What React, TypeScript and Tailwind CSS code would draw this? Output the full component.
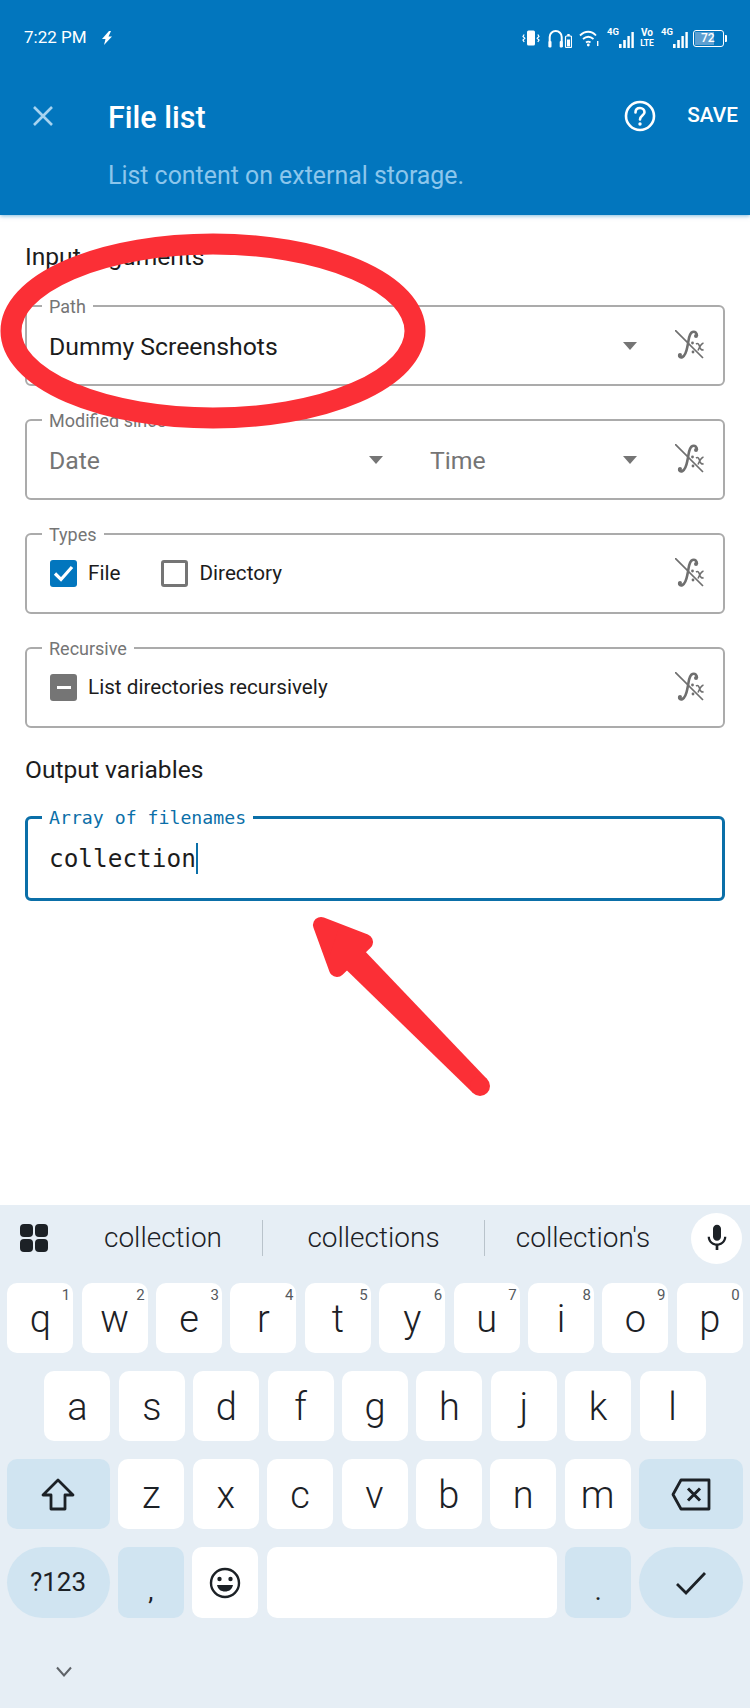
import React from 'react';

const row1 = [
  ['q', '1'], ['w', '2'], ['e', '3'], ['r', '4'], ['t', '5'],
  ['y', '6'], ['u', '7'], ['i', '8'], ['o', '9'], ['p', '0'],
];
const row2 = ['a', 's', 'd', 'f', 'g', 'h', 'j', 'k', 'l'];
const row3 = ['z', 'x', 'c', 'v', 'b', 'n', 'm'];

const Signal = () => (
  <svg width="15" height="16" viewBox="0 0 15 16" fill="#fff" className="mt-[3px] shrink-0">
    <rect x="0" y="12" width="2.600" height="4" />
    <rect x="4.200" y="8" width="2.600" height="8" />
    <rect x="8.400" y="4" width="2.400" height="12" />
    <rect x="12.400" y="0" width="2.400" height="16" />
  </svg>
);

const StatusIcons = () => (
  <div className="flex items-center text-white font-['Roboto',sans-serif] font-medium">
    {/* vibrate */}
    <svg width="18" height="16" viewBox="0 0 18 16" fill="none" stroke="#fff" strokeWidth="1.200" className="shrink-0">
      <rect x="5" y="0.500" width="8" height="15" rx="1.500" fill="#fff" stroke="none" />
      <path d="M2.200 4.500L1 6.500l1.800 1.800L1 10l1.200 2M15.800 4.500L17 6.500l-1.800 1.800L17 10l-1.200 2" />
    </svg>
    {/* headphones with battery */}
    <svg width="24" height="19" viewBox="0 0 24 19" fill="none" className="ml-[8px] shrink-0">
      <path d="M1.700 18V8a6 6 0 0 1 12 0v10" stroke="#fff" strokeWidth="2" />
      <rect x="0.500" y="12" width="3" height="6.500" rx="1" fill="#fff" />
      <rect x="11.700" y="12" width="3" height="6.500" rx="1" fill="#fff" />
      <rect x="17.500" y="7" width="6" height="11.500" rx="1" stroke="#fff" strokeWidth="1.200" />
      <rect x="19.300" y="5" width="2.400" height="2" fill="#fff" />
      <rect x="19" y="10.500" width="3" height="7" fill="#fff" />
    </svg>
    {/* wifi */}
    <svg width="20" height="18" viewBox="0 0 20 18" fill="none" stroke="#fff" strokeWidth="1.800" className="ml-[7px] shrink-0">
      <path d="M1 6.500C6 1.500 12.500 1.500 17 6.500" />
      <path d="M4 10c3.500-3 7-3 10.500 0" />
      <path d="M7 13.500c1.500-1.200 3-1.200 4.500 0" />
      <circle cx="9.300" cy="16" r="1.400" fill="#fff" stroke="none" />
      <path d="M18.700 12v5" strokeWidth="1.400" />
    </svg>
    <span className="ml-[8px] -mt-[12px] w-[12px] text-[9.500px] leading-none font-bold">4G</span>
    <Signal />
    <div className="ml-[6px] flex w-[14px] flex-col items-center text-[10px] leading-[10px] font-bold">
      <span>Vo</span>
      <span className="text-[8.500px]">LTE</span>
    </div>
    <span className="ml-[7px] -mt-[12px] w-[12px] text-[9.500px] leading-none font-bold">4G</span>
    <Signal />
    {/* battery */}
    <div className="ml-[5px] h-[17px] w-[31px] rounded-[3px] border border-white p-[1px]">
      <div className="flex h-full w-[72%] items-center justify-center bg-[#5d9fd1] pl-[6px] text-[12px] leading-none">
        72
      </div>
    </div>
    <div className="ml-[1px] h-[7px] w-[2px] rounded-r-[1px] bg-white" />
  </div>
);

const Header = () => (
  <header className="h-[215px] shrink-0 bg-[#0276BE] shadow-[0_1px_4px_rgba(2,118,190,0.5)] font-['Roboto',sans-serif]">
    <div className="flex h-[76px] items-center pl-[24px] pr-[23px]">
      <span className="text-[17px] text-white">7:22 PM</span>
      <svg width="12" height="14" viewBox="0 0 12 14" fill="#fff" className="ml-[14px]">
        <path d="M8 0L1 8h3.500L3 14l8-8.500H7.500L10 0z" />
      </svg>
      <div className="flex-1" />
      <StatusIcons />
    </div>
    <div className="flex h-[80px] items-center pl-[32px] pr-[12px]">
      <svg width="22" height="22" viewBox="0 0 22 22" fill="none" stroke="#A6D3F0" strokeWidth="2.600">
        <path d="M2 2l18 18M20 2L2 20" />
      </svg>
      <h1 className="ml-[54px] pt-[3px] text-[30.500px] font-medium text-white">File list</h1>
      <div className="flex-1" />
      <svg width="32" height="32" viewBox="0 0 32 32" fill="none" stroke="#fff" strokeWidth="2.600" strokeLinecap="round">
        <circle cx="16" cy="16" r="14" />
        <path d="M11.500 12.500c0-3 2-4.500 4.500-4.500s4.500 1.700 4.500 4.200c0 3.300-4.500 3.500-4.500 7.300" />
        <circle cx="16" cy="24" r="1.700" fill="#fff" stroke="none" />
      </svg>
      <button className="ml-[31px] text-[20.800px] font-medium text-white">SAVE</button>
    </div>
    <p className="-mt-[2px] pl-[108px] text-[24.900px] leading-[44px] text-[#8CC6EC]">List content on external storage.</p>
  </header>
);

const FxIcon = () => (
  <svg width="30" height="30" viewBox="0 0 30 30" fill="none" stroke="#6f6f6f" className="shrink-0 -mt-[2px]">
    <path d="M0 0l28 28" strokeWidth="1.700" />
    <path d="M22 6c0-3-2-5-4.500-4-4 1.500-3.500 8-5 14-1 5-1.500 9-5 11-2 1-4-.5-3-2.500" strokeWidth="2.600" />
    <circle cx="21" cy="6" r="2" fill="#6f6f6f" stroke="none" />
    <circle cx="5" cy="25" r="2" fill="#6f6f6f" stroke="none" />
    <path d="M21 14c2-1.500 3 .5 4 3.500 1 2.500 2 3 3.500 2M28.500 13c-2 .5-4 4-5.500 7.500" strokeWidth="1.600" />
    <circle cx="17.500" cy="13" r="1.400" fill="#6f6f6f" stroke="none" />
    <circle cx="18" cy="22" r="1.400" fill="#6f6f6f" stroke="none" />
  </svg>
);

const Caret = () => (
  <svg width="14" height="8" viewBox="0 0 14 8" fill="#757575" className="shrink-0">
    <path d="M0 0h14L7 8z" />
  </svg>
);

const Select = ({ text, muted, width }: { text: string; muted?: boolean; width: string }) => (
  <div className={`flex items-center justify-between ${width}`}>
    <span className={`pt-[2px] text-[24.800px] ${muted ? 'text-[#757575]' : 'text-[#1c1c1c]'}`}>{text}</span>
    <Caret />
  </div>
);

const Field = ({ label, children }: { label: string; children: React.ReactNode }) => (
  <div className="relative flex h-[81px] items-center rounded-[6px] border-2 border-[#ABABAB] pl-[22px] pr-[18px]">
    <span className="absolute -top-[11px] left-[15px] bg-white px-[7px] text-[18px] leading-[22px] text-[#757575]">
      {label}
    </span>
    {children}
  </div>
);

const Checkbox = ({ state }: { state: 'on' | 'off' | 'mixed' }) => {
  if (state === 'on') {
    return (
      <div className="flex h-[27px] w-[27px] shrink-0 items-center justify-center rounded-[3px] bg-[#0276BE]">
        <svg width="21" height="17" viewBox="0 0 21 17" fill="none" stroke="#fff" strokeWidth="3.200">
          <path d="M2 8.500l6 6L19 2" />
        </svg>
      </div>
    );
  }
  if (state === 'mixed') {
    return (
      <div className="flex h-[27px] w-[27px] shrink-0 items-center justify-center rounded-[3px] bg-[#757575]">
        <div className="h-[3px] w-[14px] bg-white" />
      </div>
    );
  }
  return <div className="h-[27px] w-[27px] shrink-0 rounded-[3px] border-[3px] border-[#757575]" />;
};

const Key = ({ letter, hint }: { letter: string; hint?: string }) => (
  <div className="relative flex h-[70px] w-[66px] shrink-0 items-center justify-center rounded-[10px] bg-white pt-[2px] text-[38px] font-light leading-none text-[#1c2126]">
    {letter}
    {hint && <span className="absolute right-[3px] top-[5px] text-[15px] font-normal leading-none text-[#55595e]">{hint}</span>}
  </div>
);

const Keyboard = () => (
  <div className="mt-auto h-[503px] shrink-0 bg-[#E6EEF5] font-['Roboto',sans-serif] text-[#1c2126]">
    <div className="flex h-[66px] items-center">
      <div className="ml-[20px] mr-[16px] grid w-[28px] shrink-0 grid-cols-2 gap-[2px]">
        <div className="h-[13px] rounded-[4px] bg-[#1c2126]" />
        <div className="h-[13px] rounded-[4px] bg-[#1c2126]" />
        <div className="h-[13px] rounded-[4px] bg-[#1c2126]" />
        <div className="h-[13px] rounded-[4px] bg-[#1c2126]" />
      </div>
      <div className="w-[198px] text-center text-[28px] font-light">collection</div>
      <div className="h-[36px] w-px bg-[#b9c3cb]" />
      <div className="w-[221px] text-center text-[28px] font-light">collections</div>
      <div className="h-[36px] w-px bg-[#b9c3cb]" />
      <div className="w-[196px] text-center text-[28px] font-light">collection's</div>
      <div className="ml-[10px] flex h-[51px] w-[51px] shrink-0 items-center justify-center rounded-full bg-white">
        <svg width="32" height="32" viewBox="0 0 24 24" fill="#1c2126">
          <path d="M12 14c1.660 0 2.990-1.340 2.990-3L15 5c0-1.660-1.340-3-3-3S9 3.340 9 5v6c0 1.660 1.340 3 3 3zm5.300-3c0 3-2.540 5.100-5.300 5.100S6.700 14 6.700 11H5c0 3.410 2.720 6.230 6 6.720V21h2v-3.280c3.280-.48 6-3.300 6-6.720h-1.700z" />
        </svg>
      </div>
    </div>

    <div className="flex flex-col gap-[18px] pt-[12px]">
      <div className="flex justify-center gap-[8.400px]">
        {row1.map(([l, h]) => (
          <Key key={l} letter={l} hint={h} />
        ))}
      </div>
      <div className="flex justify-center gap-[8.400px]">
        {row2.map((l) => (
          <Key key={l} letter={l} />
        ))}
      </div>
      <div className="flex justify-center gap-[8.400px]">
        <div className="flex h-[70px] w-[103px] shrink-0 items-center justify-center rounded-[10px] bg-[#D0E4F1]">
          <svg width="34" height="33" viewBox="0 0 34 33" fill="none" stroke="#1c2126" strokeWidth="2.800" strokeLinejoin="round">
            <path d="M17 2L2 17h8v14h14V17h8z" />
          </svg>
        </div>
        {row3.map((l) => (
          <Key key={l} letter={l} />
        ))}
        <div className="flex h-[70px] w-[104px] shrink-0 items-center justify-center rounded-[10px] bg-[#D0E4F1]">
          <svg width="40" height="33" viewBox="0 0 40 33" fill="none" stroke="#1c2126" strokeWidth="2.800" strokeLinejoin="round">
            <path d="M10 2h28v29H10L2 16.500z" />
            <path d="M17 10.500l12 12M29 10.500l-12 12" strokeWidth="3" />
          </svg>
        </div>
      </div>
      <div className="flex justify-center gap-[8.400px]">
        <div className="flex h-[71px] w-[103px] shrink-0 items-center justify-center rounded-[36px] bg-[#D0E4F1] text-[26px]">
          ?123
        </div>
        <div className="flex h-[71px] w-[66px] shrink-0 items-end justify-center rounded-[10px] bg-[#D0E4F1] pb-[14px] text-[26px] leading-none">
          ,
        </div>
        <div className="flex h-[71px] w-[66px] shrink-0 items-center justify-center rounded-[10px] bg-white">
          <svg width="32" height="32" viewBox="0 0 32 32" fill="none" stroke="#1c2126" strokeWidth="2.400">
            <circle cx="16" cy="16" r="14" />
            <circle cx="10.500" cy="12" r="2.200" fill="#1c2126" stroke="none" />
            <circle cx="21.500" cy="12" r="2.200" fill="#1c2126" stroke="none" />
            <path d="M8 18h16c-1 4.500-4 6.500-8 6.500S9 22.500 8 18z" fill="#1c2126" stroke="none" />
          </svg>
        </div>
        <div className="h-[71px] w-[290px] shrink-0 rounded-[10px] bg-white" />
        <div className="flex h-[71px] w-[66px] shrink-0 items-end justify-center rounded-[10px] bg-[#D0E4F1] pb-[14px] text-[26px] leading-none">
          .
        </div>
        <div className="flex h-[71px] w-[104px] shrink-0 items-center justify-center rounded-[36px] bg-[#D0E4F1]">
          <svg width="32" height="24" viewBox="0 0 32 24" fill="none" stroke="#1c2126" strokeWidth="2.800">
            <path d="M2 13l9 9L30 2" />
          </svg>
        </div>
      </div>
    </div>

    <div className="pl-[56px] pt-[48px]">
      <svg width="16" height="11" viewBox="0 0 16 11" fill="none" stroke="#5f6368" strokeWidth="2">
        <path d="M1 1.500l7 8 7-8" />
      </svg>
    </div>
  </div>
);

export default function App() {
  return (
    <div className="relative flex h-[1708px] w-[750px] flex-col overflow-hidden bg-white font-['Roboto',sans-serif]">
      <Header />

      <main className="px-[25px]">
        <h2 className="mt-[27px] text-[24.600px] leading-[30px] text-[#1c1c1c]">Input arguments</h2>

        <div className="mt-[33px] flex flex-col gap-[33px]">
          <Field label="Path">
            <Select text="Dummy Screenshots" width="w-[588px]" />
            <div className="ml-[38px]"><FxIcon /></div>
          </Field>
          <Field label="Modified since">
            <Select text="Date" muted width="w-[334px]" />
            <div className="ml-[47px]" />
            <Select text="Time" muted width="w-[207px]" />
            <div className="ml-[38px]"><FxIcon /></div>
          </Field>
          <Field label="Types">
            <div className="ml-[1px]"><Checkbox state="on" /></div>
            <span className="ml-[11px] pt-[1px] text-[20.700px] text-[#1c1c1c]">File</span>
            <div className="ml-[41px]"><Checkbox state="off" /></div>
            <span className="ml-[11px] pt-[1px] text-[20.700px] text-[#1c1c1c]">Directory</span>
            <div className="flex-1" />
            <FxIcon />
          </Field>
          <Field label="Recursive">
            <div className="ml-[1px]"><Checkbox state="mixed" /></div>
            <span className="ml-[11px] text-[20.700px] text-[#1c1c1c]">List directories recursively</span>
            <div className="flex-1" />
            <FxIcon />
          </Field>
        </div>

        <h2 className="mt-[27px] text-[24.600px] leading-[30px] text-[#1c1c1c]">Output variables</h2>

        <div className="relative mt-[31px] flex h-[85px] items-center rounded-[6px] border-[3px] border-[#0B6FA8] pl-[21px]">
          <span className="absolute -top-[12px] left-[14px] bg-white px-[7px] font-['DejaVu_Sans_Mono',monospace] text-[18.200px] leading-[22px] text-[#0B6FA8]">
            Array of filenames
          </span>
          <span className="pt-[2px] font-['DejaVu_Sans_Mono',monospace] text-[24.400px] text-[#1c1c1c]">collection</span>
          <div className="h-[31px] w-[2px] bg-[#0B6FA8]" />
        </div>
      </main>

      <Keyboard />

      {/* red markup drawn over the screenshot */}
      <svg className="pointer-events-none absolute left-0 top-0" width="750" height="1708" viewBox="0 0 750 1708" fill="none">
        <ellipse cx="213" cy="331" rx="202" ry="87" stroke="#FB2F36" strokeWidth="21" />
        <path d="M321 925L365 942L337 969Z" fill="#FB2F36" stroke="#FB2F36" strokeWidth="16" strokeLinejoin="round" />
        <path d="M340 925L487 1079L473 1093L330 954Z" fill="#FB2F36" />
        <circle cx="480" cy="1086" r="10" fill="#FB2F36" />
      </svg>
    </div>
  );
}
